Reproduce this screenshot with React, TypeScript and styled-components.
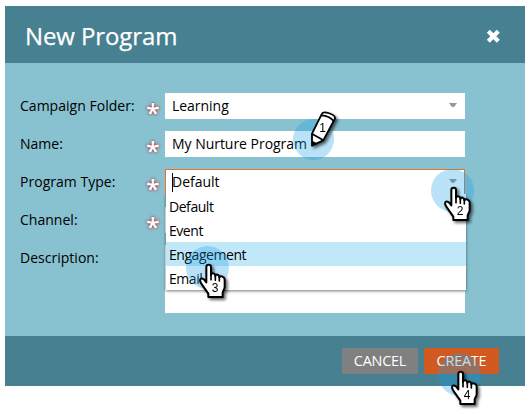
import React from 'react';
import styled, { createGlobalStyle } from 'styled-components';

const Page = createGlobalStyle`
  * { box-sizing: border-box; }
  body {
    margin: 0;
    background: #fff;
    overflow: hidden;
    font-family: 'Open Sans', 'Noto Sans', sans-serif;
    font-size: 14px;
    color: #000;
  }
`;

const Stage = styled.main`
  position: relative;
  width: 532px;
  height: 414px;
  padding: 6px 7px 28px 5px;
`;

const Dialog = styled.section`
  display: flex;
  flex-direction: column;
  height: 380px;
  background: #88c1cf;
`;

const Header = styled.header`
  display: flex;
  justify-content: space-between;
  align-items: center;
  height: 57px;
  padding: 3px 24px 0 20px;
  background: #468091;
`;

const Title = styled.h1`
  margin: 0;
  font-size: 24px;
  line-height: 32px;
  font-weight: 400;
  letter-spacing: -0.1px;
  color: #fff;
  -webkit-text-stroke: 0.25px #fff;
`;

const CloseButton = styled.button`
  display: flex;
  padding: 0;
  border: 0;
  background: none;
`;

const Form = styled.form`
  flex: 1;
  display: flex;
  flex-direction: column;
  gap: 12px;
  padding: 30px 60px 0 15px;
`;

const Row = styled.div`
  display: grid;
  grid-template-columns: 126px 19px 300px;
`;

const Label = styled.label`
  line-height: 26px;
  letter-spacing: 0.02px;
  white-space: nowrap;
`;

const Required = styled.span`
  height: 26px;
  font-size: 25px;
  font-weight: 600;
  line-height: 38px;
  color: #fff;
  text-shadow: 0 0 2px rgba(165, 40, 50, 0.8), 0 0 3px rgba(175, 50, 60, 0.9);
`;

const Field = styled.div<{ $active?: boolean; $tall?: boolean }>`
  position: relative;
  display: flex;
  justify-content: space-between;
  align-items: center;
  height: ${(p) => (p.$tall ? 68 : 26)}px;
  padding: 0 8px 0 7px;
  background: #fff;
  box-shadow: ${(p) => (p.$active ? 'inset 0 0 0 1px #e2732f' : 'none')};
`;

const Value = styled.span`
  line-height: 26px;
  letter-spacing: -0.03px;
`;

const Caret = styled.i`
  position: absolute;
  left: 7px;
  top: 4px;
  width: 1px;
  height: 19px;
  background: #000;
`;

const Menu = styled.ul`
  position: absolute;
  z-index: 1;
  top: 25px;
  left: 1px;
  width: 300px;
  margin: 0;
  padding: 0;
  list-style: none;
  background: #fff;
  box-shadow: 0 1px 3px rgba(0, 0, 0, 0.55);
  clip-path: inset(0 -5px -5px -5px);
`;

const Option = styled.li<{ $selected?: boolean }>`
  height: 24px;
  padding-left: 3px;
  font-size: 14px;
  line-height: 25px;
  letter-spacing: -0.45px;
  background: ${(p) => (p.$selected ? '#c1e8f9' : 'transparent')};
`;

const Footer = styled.footer`
  display: flex;
  justify-content: flex-end;
  gap: 6px;
  height: 50px;
  padding: 12px 26px 12px 0;
  background: #468091;
`;

const Button = styled.button<{ $primary?: boolean }>`
  width: ${(p) => (p.$primary ? 75 : 76)}px;
  height: 26px;
  padding: 0 0 1px;
  border: 0;
  font: 14.4px/26px 'Open Sans', sans-serif;
  letter-spacing: -0.2px;
  color: #fff;
  background: ${(p) => (p.$primary ? '#d15a21' : '#808080')};
`;

const Marker = styled.div<{ $x: number; $y: number; $size?: number }>`
  position: absolute;
  z-index: 2;
  left: ${(p) => p.$x}px;
  top: ${(p) => p.$y}px;
  width: ${(p) => p.$size ?? 43}px;
  height: ${(p) => p.$size ?? 43}px;
  border-radius: 50%;
  background: rgba(22, 158, 232, 0.3);
`;

const Drawing = styled.svg<{ $x: number; $y: number }>`
  position: absolute;
  left: ${(p) => p.$x}px;
  top: ${(p) => p.$y}px;
  overflow: visible;
  filter: drop-shadow(2px 2px 1.5px rgba(0, 0, 0, 0.6));
  font-family: 'Liberation Sans', Arial, sans-serif;
`;

const ArrowIcon = styled.svg`
  margin-bottom: 2px;
`;

const Arrow = () => (
  <ArrowIcon width="8" height="4" viewBox="0 0 8 4"><path d="M0 0H8L5 4H3Z" fill="#969696" /></ArrowIcon>
);

function HandPointer({ x, y, step }: { x: number; y: number; step: number }) {
  return (
    <Marker $x={x} $y={y}>
      <Drawing $x={12} $y={16} width="28" height="36" viewBox="0 0 84 108">
        <path
          d="M25 59V15C25 6 39 6 39 15V39C41 32 51 32 52 42C54 35 64 37 64 46C67 40 79 43 80 52V76C79 83 75 87 74 92V105H31V95L12 68C5 59 5 52 9 50C15 48 20 54 25 61Z"
          fill="#fff" stroke="#000" strokeWidth="6" strokeLinejoin="round"
        />
        <path d="M39 38V53M52 42V55M64 46V57" fill="none" stroke="#000" strokeWidth="5" strokeLinecap="round" />
        <text x="51" y="91" textAnchor="middle" fontSize="36">{step}</text>
      </Drawing>
    </Marker>
  );
}

function PencilPointer() {
  return (
    <Marker $x={293} $y={119} $size={41}>
      <Drawing $x={17} $y={-9} width="27" height="37" viewBox="0 0 81 111">
        <path
          d="M6 107V71L36 11C40 2 76 12 75 25L40 91Z"
          fill="#fff" stroke="#000" strokeWidth="5.5" strokeLinejoin="round"
        />
        <path d="M34 16Q58 17 71 33M7 72L39 90" fill="none" stroke="#000" strokeWidth="5" />
        <path d="M6 92L20 99L6 107Z" />
        <text x="38" y="66" textAnchor="middle" fontSize="36">1</text>
      </Drawing>
    </Marker>
  );
}

export default function App() {
  return (
    <Stage>
      <Page />
      <Dialog>
        <Header>
          <Title>New Program</Title>
          <CloseButton type="button" aria-label="Close">
            <svg width="15" height="15" viewBox="0 0 15 15">
              <path d="M2.3 2.3L12.3 12.3M12.3 2.3L2.3 12.3" stroke="#fff" strokeWidth="4.2" />
            </svg>
          </CloseButton>
        </Header>
        <Form>
          <Row>
            <Label>Campaign Folder:</Label>
            <Required>*</Required>
            <Field><Value>Learning</Value><Arrow /></Field>
          </Row>
          <Row>
            <Label>Name:</Label>
            <Required>*</Required>
            <Field><Value>My Nurture Program</Value></Field>
          </Row>
          <Row>
            <Label>Program Type:</Label>
            <Required>*</Required>
            <Field $active>
              <Caret />
              <Value>Default</Value>
              <Arrow />
              <Menu>
                <Option>Default</Option>
                <Option>Event</Option>
                <Option $selected>Engagement</Option>
                <Option>Email</Option>
              </Menu>
            </Field>
          </Row>
          <Row>
            <Label>Channel:</Label>
            <Required>*</Required>
            <Field />
          </Row>
          <Row>
            <Label>Description:</Label>
            <span />
            <Field $tall />
          </Row>
        </Form>
        <Footer>
          <Button type="button">CANCEL</Button>
          <Button type="button" $primary>CREATE</Button>
        </Footer>
      </Dialog>
      <PencilPointer />
      <HandPointer x={431} y={169} step={2} />
      <HandPointer x={186} y={246} step={3} />
      <HandPointer x={438} y={353} step={4} />
    </Stage>
  );
}
